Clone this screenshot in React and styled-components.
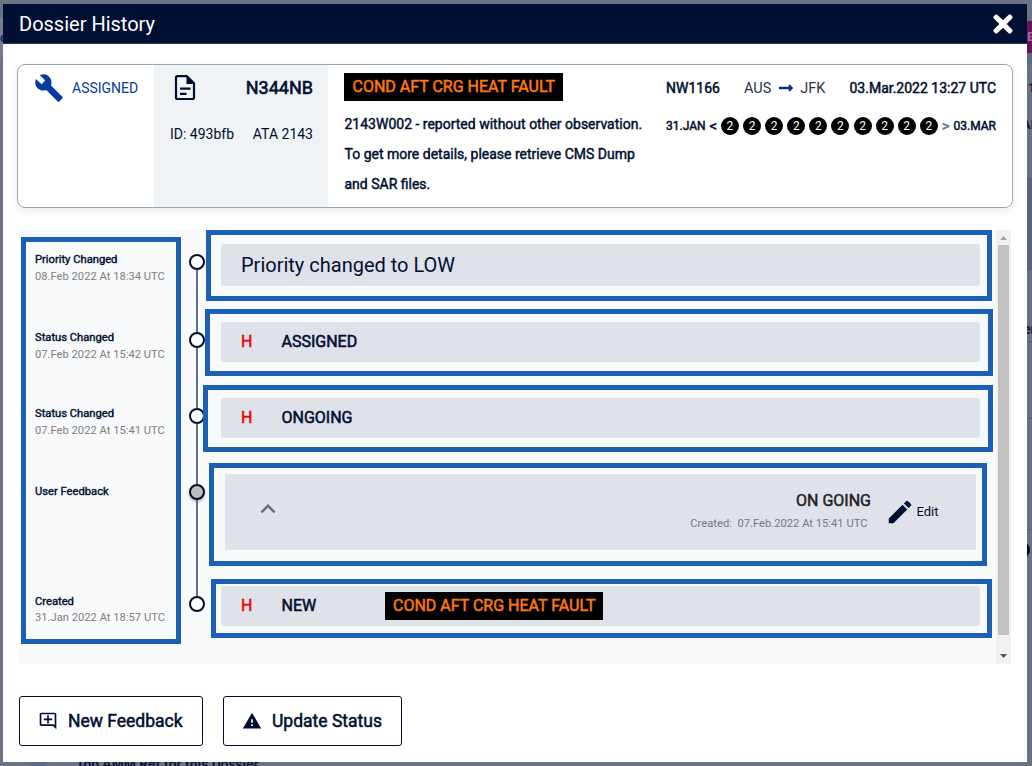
import React from "react";
import styled, { createGlobalStyle } from "styled-components";
import { FaTimes, FaLongArrowAltRight } from "react-icons/fa";
import { MdBuild, MdEdit, MdExpandLess, MdWarning, MdOutlineAddComment } from "react-icons/md";

const Global = createGlobalStyle`
  * { box-sizing: border-box; }
  html, body { margin: 0; height: 100%; overflow: hidden; }
  body { font-family: Roboto, "Liberation Sans", sans-serif; color: #000f30; background: #6b7285; }
`;

const Page = styled.div`
  position: relative;
  width: 1032px;
  height: 766px;
  padding: 4px 5px 4px 3px;
  overflow: hidden;
  background: #6b7285;
`;

const Peek = styled.div`
  position: absolute;
  left: ${(p) => p.$x}px;
  top: ${(p) => p.$y}px;
  width: ${(p) => (p.$w ? `${p.$w}px` : "auto")};
  height: ${(p) => p.$h}px;
  line-height: ${(p) => p.$h}px;
  background: ${(p) => p.$bg || "transparent"};
  color: ${(p) => p.$c || "#0a1638"};
  border-radius: ${(p) => p.$r || 0};
  font-size: ${(p) => p.$size || 13}px;
  font-weight: 700;
  white-space: nowrap;
  overflow: hidden;
`;

const Modal = styled.section`
  position: relative;
  display: flex;
  flex-direction: column;
  height: 758px;
  background: #fff;
`;

const Header = styled.header`
  display: flex;
  align-items: center;
  justify-content: space-between;
  flex: none;
  height: 40px;
  padding: 0 13px 0 16px;
  background: #001032;
  border-bottom: 1px solid #2b3755;
  color: #fff;
  font-size: 20px;
  svg { display: block; font-size: 28px; margin-right: -3px; }
`;

const Heavy = styled.span`
  font-size: ${(p) => p.$size}px;
  color: ${(p) => p.$color || "inherit"};
  -webkit-text-stroke: ${(p) => p.$stroke || 0.5}px currentColor;
  white-space: nowrap;
`;

const Card = styled.div`
  display: flex;
  flex: none;
  height: 144px;
  margin: 20px 14px 0;
  border: 1px solid #9aa6b1;
  border-radius: 8px;
  box-shadow: 0 3px 8px rgba(0, 0, 0, 0.08);
`;

const StatusCell = styled.div`
  display: flex;
  width: 136px;
  padding: 7px 0 0 16px;
  color: #063c9c;
  font-size: 14px;
  line-height: 32px;
  svg { margin: 1px 8px 0 0; font-size: 30px; }
`;

const AircraftCell = styled.div`
  width: 174px;
  padding: 8px 15px 0 16px;
  background: #f0f3f6;
`;

const Split = styled.div`
  display: flex;
  align-items: center;
  justify-content: space-between;
  height: ${(p) => p.$h}px;
  font-size: 14px;
`;

const FaultCell = styled.div`
  width: 322px;
  padding: 8px 0 0 16px;
`;

const Fault = styled.span`
  display: inline-flex;
  align-items: center;
  height: 28px;
  padding: 0 8px 2px 8.500px;
  background: #000;
`;

const Description = styled.p`
  width: 305px;
  margin: 8px 0 0;
  padding-left: 0.5px;
  font-size: 14px;
  line-height: 30px;
  -webkit-text-stroke: 0.45px currentColor;
`;

const FlightCell = styled.div`
  width: 330px;
  margin-left: 16px;
  padding-top: 8px;
`;

const Route = styled.span`
  display: flex;
  align-items: center;
  gap: 6.5px;
  color: #2a3448;
  font-size: 14.5px;
  svg { color: #06308a; font-size: 16px; }
`;

const Dots = styled.div`
  display: flex;
  gap: 4.1px;
`;

const Dot = styled.i`
  width: 18px;
  height: 18px;
  border-radius: 50%;
  background: #000;
  color: #fff;
  font-size: 12px;
  font-style: normal;
  line-height: 18px;
  text-align: center;
`;

const DayRow = styled.div`
  display: flex;
  align-items: center;
  justify-content: space-between;
  height: 18px;
  margin-top: 14px;
`;

const Panel = styled.div`
  position: relative;
  display: flex;
  flex: none;
  height: 434px;
  margin: 22px 16px 0;
  background: #f8f9fb;
`;

const Timeline = styled.div`
  flex: 1;
  padding: 14px 16px 0;
`;

const Entry = styled.div`
  display: flex;
  height: ${(p) => p.$h}px;
`;

const EntryLabel = styled.div`
  width: 154px;
  padding-top: ${(p) => p.$top}px;
  font-size: 11.2px;
  line-height: 17px;
  color: #808080;
  white-space: nowrap;
`;

const EntryTitle = styled.div`
  color: #000f30;
  line-height: ${(p) => p.$lead}px;
  -webkit-text-stroke: 0.4px currentColor;
`;

const Rail = styled.div`
  display: flex;
  flex-direction: column;
  align-items: center;
  width: 16px;
  &::after {
    content: "";
    flex: 1;
    width: 2px;
    margin-bottom: -10px;
    background: ${(p) => (p.$last ? "transparent" : "#5f7092")};
  }
`;

const Node = styled.div`
  flex: none;
  width: 16px;
  height: 16px;
  margin-top: 10px;
  border: 2px solid #000f30;
  border-radius: 50%;
  background: ${(p) => (p.$filled ? "#bdbdbd" : "#fff")};
  box-shadow: ${(p) => (p.$filled ? "0 2px 3px rgba(0,0,0,.25)" : "none")};
`;

const Bar = styled.div`
  display: flex;
  align-items: center;
  width: 759px;
  height: ${(p) => p.$h || 40}px;
  margin-left: 16px;
  padding: 0 20px ${(p) => (p.$h ? 0 : 2)}px;
  border-radius: 3px;
  background: #e0e2ea;
  font-size: 20px;
  > ${Fault} { margin-top: 2px; padding: 0 7.5px 2px 8px; }
`;

const Code = styled.span`
  width: 40.5px;
  color: #ee0005;
  font-size: 16px;
  -webkit-text-stroke: 0.5px currentColor;
`;

const BarStatus = styled.span`
  width: 103.5px;
  font-size: 16px;
  -webkit-text-stroke: 0.55px currentColor;
`;

const Feedback = styled.div`
  display: flex;
  align-items: center;
  width: 751px;
  height: 76px;
  margin-left: 20px;
  padding: 0 37.5px 0 28px;
  background: #e0e2ea;
  > svg { color: #6c6d70; font-size: 30px; margin: -6px auto 0 0; }
`;

const FeedbackMeta = styled.div`
  display: flex;
  flex-direction: column;
  align-items: flex-end;
  margin-right: 14.5px;
  color: #78797e;
  font-size: 11.2px;
  line-height: 23px;
  white-space: pre;
`;

const Created = styled.span`
  margin-right: 3.5px;
`;

const Edit = styled.div`
  display: flex;
  align-items: center;
  padding-bottom: 1px;
  font-size: 13px;
  svg { font-size: 30px; margin-right: 1px; }
`;

const Highlight = styled.div`
  position: absolute;
  left: ${(p) => p.$x}px;
  top: ${(p) => p.$y}px;
  width: ${(p) => p.$w}px;
  height: ${(p) => p.$h}px;
  border: 5px solid #1b60b5;
  pointer-events: none;
`;

const Scroll = styled.div`
  display: flex;
  flex-direction: column;
  align-items: center;
  width: 15px;
  background: #f1f1f1;
`;

const Thumb = styled.div`
  width: 11px;
  height: 390px;
  background: #c1c1c1;
`;

const Arrow = styled.svg`
  width: 15px;
  height: ${(p) => p.$h}px;
`;

const Footer = styled.footer`
  display: flex;
  gap: 20px;
  margin: 32px 16px 0;
`;

const Button = styled.button`
  display: flex;
  align-items: center;
  gap: 10px;
  width: ${(p) => p.$w}px;
  height: 50px;
  padding: 0 18px;
  border: 1px solid #000f30;
  border-radius: 3px;
  background: #fff;
  color: #000f30;
  font-family: inherit;
  svg { flex: none; font-size: 20px; }
  span { padding-bottom: 1px; }
`;

const ENTRIES = [
  { title: "Priority Changed", date: "08.Feb 2022 At 18:34 UTC", h: 78, bar: 42, text: "Priority changed to LOW" },
  { title: "Status Changed", date: "07.Feb 2022 At 15:42 UTC", h: 76, status: "ASSIGNED" },
  { title: "Status Changed", date: "07.Feb 2022 At 15:41 UTC", h: 76, status: "ONGOING" },
  { title: "User Feedback", h: 112, feedback: true },
  { title: "Created", date: "31.Jan 2022 At 18:57 UTC", h: 60, status: "NEW", fault: true, last: true },
];

const HIGHLIGHTS = [
  [2, 7, 160, 407],
  [187, 0, 786, 71],
  [186, 79, 788, 67],
  [184, 155, 790, 67],
  [190, 233, 778, 103],
  [192, 349, 781, 59],
];

function FaultTag() {
  return (
    <Fault>
      <Heavy $size={16} $color="#ff7a0a">COND AFT CRG HEAT FAULT</Heavy>
    </Fault>
  );
}

function DocumentIcon() {
  return (
    <svg width="30" height="28" viewBox="0 0 30 28">
      <path d="M7.500 3.200h9.500l7 7v14.300a1.500 1.500 0 0 1-1.500 1.500h-15a1.500 1.500 0 0 1-1.500-1.500v-19.800a1.500 1.500 0 0 1 1.500-1.500z" fill="none" stroke="#000f30" strokeWidth="2.200" strokeLinejoin="round" />
      <path d="M16.500 2.500l8.500 8.500h-8.500zM10 14.500h10.500v2.200h-10.500zM10 19.800h6.500v2.200h-6.500z" fill="#000f30" />
    </svg>
  );
}

function EntryBody({ entry }) {
  if (entry.feedback) {
    return (
      <Feedback>
        <MdExpandLess />
        <FeedbackMeta>
          <Heavy $size={16} $color="#1f2024">ON GOING</Heavy>
          <Created>Created:  07.Feb.2022 At 15:41 UTC</Created>
        </FeedbackMeta>
        <Edit><MdEdit />Edit</Edit>
      </Feedback>
    );
  }
  return (
    <Bar $h={entry.bar}>
      {entry.text || (
        <>
          <Code>H</Code>
          <BarStatus>{entry.status}</BarStatus>
          {entry.fault && <FaultTag />}
        </>
      )}
    </Bar>
  );
}

export default function App() {
  return (
    <Page>
      <Global />
      <Peek $x={0} $y={18} $w={3} $h={39} $bg="#777d90" $c="#12296b">c</Peek>
      <Peek $x={1027} $y={21} $w={5} $h={32} $bg="#691457" $c="#a06c99">E</Peek>
      <Peek $x={1027} $y={53} $w={5} $h={12} $bg="#5f6b83" />
      <Peek $x={1027} $y={177} $w={5} $h={94} $bg="#596580" />
      <Peek $x={1028} $y={80} $h={16}>1</Peek>
      <Peek $x={1022} $y={117} $h={16}>AN</Peek>
      <Peek $x={1023} $y={321} $h={16} $size={14}>er</Peek>
      <Peek $x={1029} $y={341} $w={3} $h={1} $bg="#4f566a" />
      <Peek $x={1029} $y={418} $w={3} $h={1} $bg="#4f566a" />
      <Peek $x={1027} $y={529} $w={5} $h={1} $bg="#565d71" />
      <Peek $x={1014} $y={542} $w={16} $h={16} $bg="#000819" $r="50%" />
      <Peek $x={30} $y={759} $w={15} $h={8} $bg="#596b8e" />
      <Peek $x={76} $y={756} $h={16} $size={13.8}>Top AMM Ref for this Dossier</Peek>
      <Modal>
        <Header>Dossier History<FaTimes /></Header>
        <Card>
          <StatusCell><MdBuild />ASSIGNED</StatusCell>
          <AircraftCell>
            <Split $h={28}>
              <DocumentIcon />
              <Heavy $size={18} $stroke={0.6}>N344NB</Heavy>
            </Split>
            <Split $h={65}><span>ID: 493bfb</span><span>ATA 2143</span></Split>
          </AircraftCell>
          <FaultCell>
            <FaultTag />
            <Description>2143W002 - reported without other observation. To get more details, please retrieve CMS Dump and SAR files.</Description>
          </FaultCell>
          <FlightCell>
            <Split $h={30}>
              <Heavy $size={14}>NW1166</Heavy>
              <Route>AUS <FaLongArrowAltRight /> JFK</Route>
              <Heavy $size={14}>03.Mar.2022 13:27 UTC</Heavy>
            </Split>
            <DayRow>
              <Heavy $size={12}>31.JAN</Heavy>
              <Heavy $size={15}>&lt;</Heavy>
              <Dots>{Array.from({ length: 10 }, (_, i) => <Dot key={i}>2</Dot>)}</Dots>
              <Heavy $size={15} $color="#64728f">&gt;</Heavy>
              <Heavy $size={12}>03.MAR</Heavy>
            </DayRow>
          </FlightCell>
        </Card>
        <Panel>
          <Timeline>
            {ENTRIES.map((e, i) => (
              <Entry key={i} $h={e.h}>
                <EntryLabel $top={e.feedback ? 9 : e.last ? 8 : 7}>
                  <EntryTitle $lead={e.last ? 15 : 17}>{e.title}</EntryTitle>
                  {e.date}
                </EntryLabel>
                <Rail $last={e.last}><Node $filled={e.feedback} /></Rail>
                <EntryBody entry={e} />
              </Entry>
            ))}
          </Timeline>
          <Scroll>
            <Arrow $h={15}><path d="M4 10l3.500-4 3.500 4z" fill="#a3a3a3" /></Arrow>
            <Thumb />
            <Arrow $h={29}><path d="M4 19l3.500 4 3.500-4z" fill="#505050" /></Arrow>
          </Scroll>
          {HIGHLIGHTS.map(([x, y, w, h]) => <Highlight key={y} $x={x} $y={y} $w={w} $h={h} />)}
        </Panel>
        <Footer>
          <Button $w={184}><MdOutlineAddComment /><Heavy $size={17.5}>New Feedback</Heavy></Button>
          <Button $w={179}><MdWarning /><Heavy $size={17.5}>Update Status</Heavy></Button>
        </Footer>
      </Modal>
    </Page>
  );
}
